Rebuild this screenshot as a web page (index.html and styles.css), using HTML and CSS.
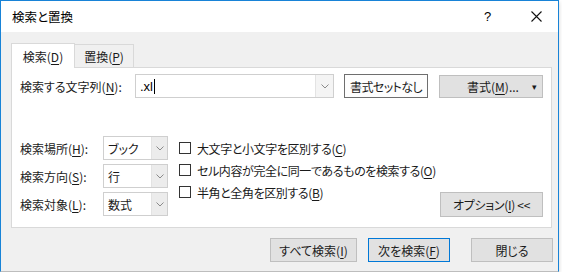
FILE: index.html
```html
<!DOCTYPE html>
<html>
<head>
  <title>検索と置換</title>
  <link rel="stylesheet" href="styles.css">
</head>
<body>
  <div class="window">
    <div class="titlebar">
      <span class="title">検索と置換</span>
      <span class="help">?</span>
      <span class="close">
        <svg width="11" height="11" viewBox="0 0 11 11"><path d="M0.5 0.5 L10.5 10.5 M10.5 0.5 L0.5 10.5" stroke="#111" stroke-width="1.1" fill="none"/></svg>
      </span>
    </div>
    <div class="client">
      <div class="tabs">
        <div class="tab active">検索(<u>D</u>)</div>
        <div class="tab">置換(<u>P</u>)</div>
      </div>
      <div class="panel">
        <div class="find-row">
          <label class="find-label">検索する文字列(<u>N</u>):</label>
          <div class="combo find-combo">
            <span class="combo-text find-text">.xl<span class="caret"></span></span>
            <span class="combo-arrow"><svg width="8" height="5" viewBox="0 0 8 5"><path d="M0.5 0.5 L4 4 L7.5 0.5" stroke="#8a8a8a" fill="none"/></svg></span>
          </div>
          <button class="btn btn-outline">書式セットなし</button>
          <button class="btn btn-format"><span class="btn-label">書式(<u>M</u>)...</span><span class="tri">▾</span></button>
        </div>
        <div class="options">
          <div class="scope-grid">
            <label class="scope-label">検索場所(<u>H</u>):</label>
            <div class="combo select"><span class="combo-text">ブック</span><span class="combo-arrow"><svg width="8" height="5" viewBox="0 0 8 5"><path d="M0.5 0.5 L4 4 L7.5 0.5" stroke="#8a8a8a" fill="none"/></svg></span></div>
            <label class="scope-label">検索方向(<u>S</u>):</label>
            <div class="combo select"><span class="combo-text">行</span><span class="combo-arrow"><svg width="8" height="5" viewBox="0 0 8 5"><path d="M0.5 0.5 L4 4 L7.5 0.5" stroke="#8a8a8a" fill="none"/></svg></span></div>
            <label class="scope-label">検索対象(<u>L</u>):</label>
            <div class="combo select"><span class="combo-text">数式</span><span class="combo-arrow"><svg width="8" height="5" viewBox="0 0 8 5"><path d="M0.5 0.5 L4 4 L7.5 0.5" stroke="#8a8a8a" fill="none"/></svg></span></div>
          </div>
          <div class="checks">
            <div class="check-row"><span class="checkbox"></span>大文字と小文字を区別する(<u>C</u>)</div>
            <div class="check-row"><span class="checkbox"></span>セル内容が完全に同一であるものを検索する(<u>O</u>)</div>
            <div class="check-row"><span class="checkbox"></span>半角と全角を区別する(<u>B</u>)</div>
          </div>
          <button class="btn btn-options">オプション(<u>I</u>) &lt;&lt;</button>
        </div>
      </div>
      <div class="footer">
        <button class="btn btn-all">すべて検索(<u>I</u>)</button>
        <button class="btn btn-next">次を検索(<u>F</u>)</button>
        <button class="btn btn-close">閉じる</button>
      </div>
    </div>
  </div>
</body>
</html>
```

FILE: styles.css
```css
/* Page */
body {
  margin: 0;
  background: #fff;
  font-family: "Noto Sans CJK JP", "Noto Sans", sans-serif;
  font-size: 12px;
  font-feature-settings: "palt";
  color: #1a1a1a;
}

u {
  text-decoration-thickness: 1px;
  text-underline-offset: 2px;
}

/* Dialog window */
.window {
  width: 559px;
  height: 272px;
  box-sizing: border-box;
  border: 1px solid #1883d7;
  border-bottom-color: #bdbdbd;
  background: #f0f0f0;
  display: flex;
  flex-direction: column;
  box-shadow: 0 2px 4px rgba(0, 0, 0, 0.18);
}

/* Title bar */
.titlebar {
  height: 31px;
  flex: none;
  background: #fff;
  display: flex;
  align-items: center;
  padding-left: 11px;
  font-size: 12.5px;
  color: #000;
}

.title {
  flex: 1;
}

.help {
  width: 12px;
  margin-right: 35px;
  font-family: "Liberation Sans", sans-serif;
  font-size: 13px;
}

.close {
  display: flex;
  margin-right: 16px;
}

/* Client area */
.client {
  flex: 1;
  padding: 11px 5px 0 10px;
}

/* Tabs */
.tabs {
  display: flex;
  align-items: flex-start;
  height: 24px;
}

.tab {
  height: 23px;
  margin-top: 1px;
  box-sizing: border-box;
  border: 1px solid #d9d9d9;
  border-left: none;
  border-bottom: none;
  width: 59px;
  display: flex;
  align-items: center;
  justify-content: center;
  background: #f0f0f0;
}

.tab.active {
  width: 64px;
  height: 25px;
  margin-top: 0;
  border-left: 1px solid #d9d9d9;
  background: #fff;
  position: relative;
  z-index: 1;
}

/* Panel */
.panel {
  width: 541px;
  height: 161px;
  box-sizing: border-box;
  border: 1px solid #d9d9d9;
  background: #fff;
  padding: 6px 8px 0 8px;
}

/* Find row */
.find-row {
  display: flex;
  align-items: center;
  height: 24px;
}

.find-label {
  width: 115px;
  flex: none;
}

.combo {
  display: flex;
  flex: none;
  height: 24px;
  box-sizing: border-box;
  border: 1px solid #cfcfcf;
  background: #fff;
}

.find-combo {
  width: 199px;
}

.combo-text {
  flex: 1;
  display: flex;
  align-items: center;
  padding-left: 4px;
}

.find-text {
  font-family: "Liberation Sans", sans-serif;
  font-size: 13px;
  color: #000;
}

.caret {
  display: inline-block;
  width: 1px;
  height: 15px;
  background: #000;
  margin-left: 1px;
}

.combo-arrow {
  width: 17px;
  border-left: 1px solid #e3e3e3;
  background: #f4f4f4;
  display: flex;
  align-items: center;
  justify-content: center;
}

/* Buttons */
.btn {
  font-family: inherit;
  font-size: 12px;
  font-feature-settings: "palt";
  color: #1a1a1a;
  height: 24px;
  padding: 0;
  flex: none;
  white-space: nowrap;
  box-sizing: border-box;
  border: 1px solid #bfbfbf;
  background: #e1e1e1;
}

.btn-outline {
  width: 84px;
  margin-left: 10px;
  border-color: #6e6e6e;
  background: #fdfdfd;
  letter-spacing: -0.6px;
}

.btn-format {
  width: 104px;
  height: 23px;
  margin-left: 11px;
  display: flex;
  align-items: center;
}

.btn-label {
  flex: 1;
  padding-left: 14px;
}

.tri {
  font-size: 9px;
  margin-right: 5px;
}

/* Options area */
.options {
  display: flex;
  margin-top: 38px;
}

.scope-grid {
  display: grid;
  flex: none;
  grid-template-columns: 83px 65px;
  grid-auto-rows: 24px;
  row-gap: 4px;
  align-items: center;
}

.select {
  width: 65px;
}

.select .combo-arrow {
  width: 15px;
  background: #ececec;
}

.checks {
  flex: none;
  margin-left: 11px;
  margin-top: 1px;
}

.check-row {
  height: 22px;
  display: flex;
  align-items: center;
  white-space: nowrap;
  letter-spacing: -0.4px;
}

.checkbox {
  width: 12px;
  height: 12px;
  flex: none;
  box-sizing: border-box;
  border: 1px solid #333;
  margin-right: 6px;
}

.btn-options {
  margin-left: auto;
  align-self: flex-end;
  width: 103px;
  height: 25px;
  margin-bottom: -1px;
  letter-spacing: -0.3px;
}

/* Footer buttons */
.footer {
  display: flex;
  justify-content: flex-end;
  margin-top: 10px;
}

.btn-all {
  width: 87px;
}

.btn-next {
  width: 82px;
  margin-left: 11px;
  border-color: #0078d7;
}

.btn-close {
  width: 82px;
  margin-left: 21px;
}
```
